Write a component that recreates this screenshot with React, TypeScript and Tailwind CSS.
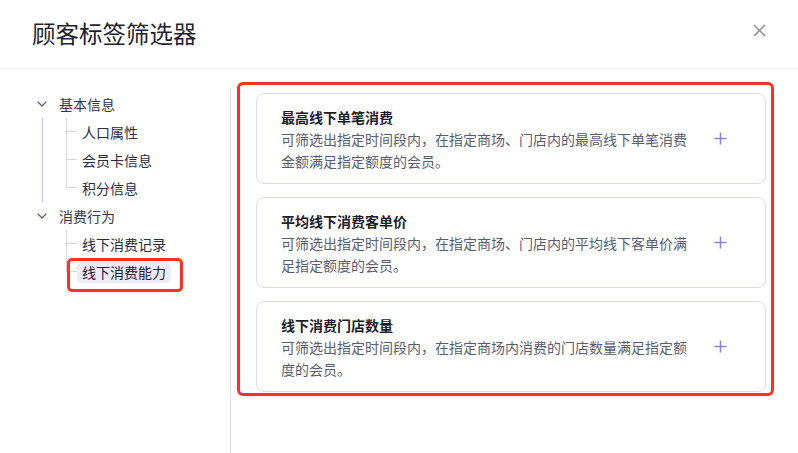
import React from 'react'

const font = { fontFamily: '"Noto Sans CJK SC", "Noto Sans", sans-serif' }

interface Card {
  title: string
  desc: string
}

const cards: Card[] = [
  {
    title: '最高线下单笔消费',
    desc: '可筛选出指定时间段内，在指定商场、门店内的最高线下单笔消费金额满足指定额度的会员。',
  },
  {
    title: '平均线下消费客单价',
    desc: '可筛选出指定时间段内，在指定商场、门店内的平均线下客单价满足指定额度的会员。',
  },
  {
    title: '线下消费门店数量',
    desc: '可筛选出指定时间段内，在指定商场内消费的门店数量满足指定额度的会员。',
  },
]

const Chevron = () => (
  <svg width="10" height="6" viewBox="0 0 10 6" fill="none" className="shrink-0">
    <path d="M1 1l4 4 4-4" stroke="#5b5d6e" strokeWidth="1.2" strokeLinecap="round" strokeLinejoin="round" />
  </svg>
)

const Plus = () => (
  <svg width="13" height="13" viewBox="0 0 13 13" fill="none" className="shrink-0">
    <path d="M6.5 0.5v12M0.5 6.5h12" stroke="#8b80ec" strokeWidth="1.5" />
  </svg>
)

const Close = () => (
  <svg width="13" height="13" viewBox="0 0 13 13" fill="none">
    <path d="M1 1l11 11M12 1L1 12" stroke="#8c8ca2" strokeWidth="1.5" />
  </svg>
)

interface Group {
  label: string
  guide: boolean
  items: { label: string; active?: boolean }[]
}

const groups: Group[] = [
  {
    label: '基本信息',
    guide: true,
    items: [{ label: '人口属性' }, { label: '会员卡信息' }, { label: '积分信息' }],
  },
  {
    label: '消费行为',
    guide: false,
    items: [{ label: '线下消费记录' }, { label: '线下消费能力', active: true }],
  },
]

export default function App() {
  return (
    <div className="w-[798px] h-[453px] bg-white flex flex-col overflow-hidden" style={font}>
      <header className="h-[69px] shrink-0 flex items-center justify-between pl-[32px] pr-[32px] border-b border-[#e9e9ee]">
        <h1 className="text-[23.5px] leading-[32px] text-[#1e1f30] pb-[2px]">顾客标签筛选器</h1>
        <button className="w-[13px] h-[13px] flex items-center justify-center mb-[7px]">
          <Close />
        </button>
      </header>

      <div className="flex flex-1 min-h-0">
        <aside className="relative w-[231px] shrink-0 mt-[19px] border-r border-[#dddcea] pt-[2px]">
          {groups.map((g) => (
            <div key={g.label}>
              <div className="h-[28px] flex items-center pl-[37px] gap-[12px]">
                <Chevron />
                <span className="text-[14px] text-[#33354a]">{g.label}</span>
              </div>
              <div className={`ml-[42px] border-l ${g.guide ? 'border-[#c8c2f4]' : 'border-transparent'}`}>
                {g.items.map((it, i) => {
                  const last = i === g.items.length - 1
                  return (
                    <div key={it.label} className="h-[28px] flex items-stretch pl-[23px]">
                      <div className="w-[11px] flex flex-col">
                        <div className="h-[14px] border-l border-b border-[#d6d6de]" />
                        <div className={`flex-1 ${last ? '' : 'border-l border-[#d6d6de]'}`} />
                      </div>
                      <div className="flex items-center">
                        <span
                          className={`text-[14px] leading-[21px] px-[5px] rounded-[5px] ${
                            it.active ? 'bg-[#eeecfb] text-[#1f2033]' : 'text-[#2b2d40]'
                          }`}
                        >
                          {it.label}
                        </span>
                      </div>
                    </div>
                  )
                })}
              </div>
            </div>
          ))}
          <div className="absolute left-[67px] top-[170px] w-[116px] h-[34px] border-[3px] border-[#ff3020] rounded-[5px]" />
        </aside>

        <main className="relative flex-1 pl-[25px] pr-[32px] pt-[24px] flex flex-col gap-[13px]">
          {cards.map((c) => (
            <div
              key={c.title}
              className="h-[91px] border border-[#dcdbea] rounded-[8px] flex items-center pl-[24px] pr-[38px]"
            >
              <div className="w-[412px]">
                <div className="text-[14px] leading-[22px] font-semibold text-[#1c1d2b]">{c.title}</div>
                <div className="text-[14px] leading-[22px] text-[#5a5d72]">{c.desc}</div>
              </div>
              <div className="ml-auto">
                <Plus />
              </div>
            </div>
          ))}
          <div className="absolute left-[6px] top-[13px] w-[537px] h-[314px] border-[3px] border-[#ff3020] rounded-[6px] pointer-events-none" />
        </main>
      </div>
    </div>
  )
}
